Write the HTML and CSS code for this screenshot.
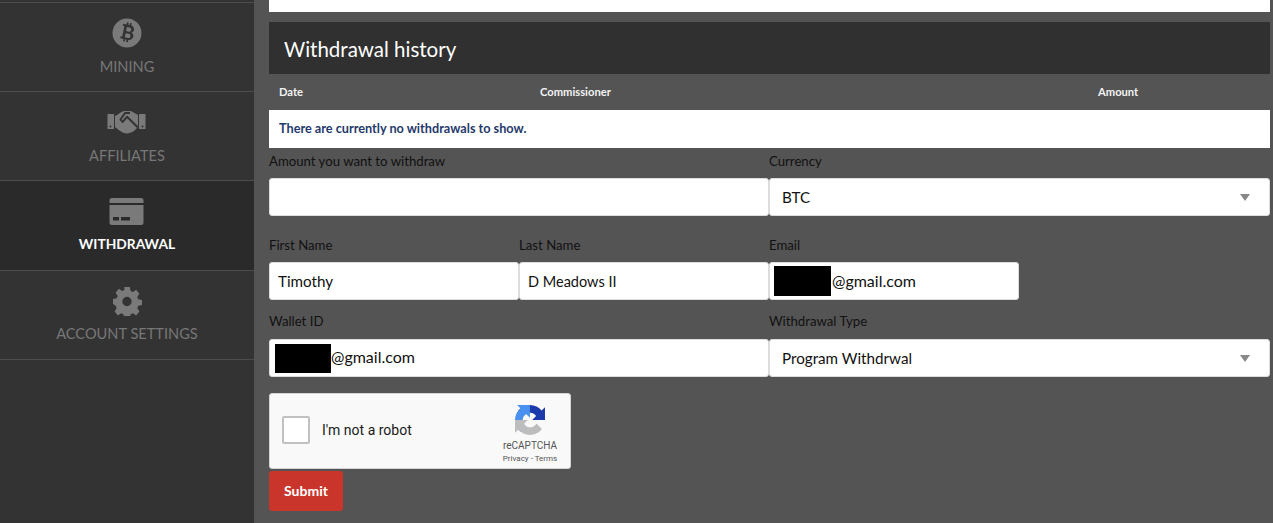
FILE: index.html
```html
<!DOCTYPE html>
<html lang="en">
<head>
<meta charset="utf-8">
<title>Withdrawal</title>
<link rel="stylesheet" href="styles.css">
</head>
<body>
<div class="page">
  <nav class="sidebar">
    <a class="nav-item nav-item-low">
      <svg class="nav-icon" width="30" height="30" viewBox="0 0 30 30"><circle cx="15" cy="15" r="14.5" fill="#7a7a7a"/><path fill="#333" fill-rule="evenodd" transform="rotate(12 15 15) translate(-1.500 -1.500) scale(1.100)" d="M10 7.5h3V5.5h1.6v2h1.2V5.5h1.6v2.1c2 .4 3.2 1.6 3.2 3.4 0 1.3-.6 2.2-1.7 2.8 1.5.5 2.4 1.6 2.4 3.2 0 2.3-1.6 3.6-3.9 3.9v2.1h-1.6v-2h-1.2v2H13v-2h-3v-1.9h1.4V9.4H10zm3.8 2.2v3.8h2.4c1.1 0 1.9-.8 1.9-1.9s-.8-1.9-1.9-1.9zm0 5.7v3.9h2.9c1.2 0 2-.8 2-1.9 0-1.2-.8-2-2-2z"/></svg>
      <span class="nav-label">MINING</span>
    </a>
    <a class="nav-item nav-item-low">
      <svg class="nav-icon" width="40" height="30" viewBox="0 0 40 30"><g fill="#7a7a7a"><rect x="0.500" y="7" width="6.500" height="15" rx=".5"/><rect x="32" y="7" width="6.500" height="15" rx=".5"/><path d="M8 9C11 8 13 5 17 4H24C26 5 29 7 31 8V20L27 24C24 26 20 27 17 26C14 25 11 22 8 20Z"/></g><g fill="#333"><circle cx="3.500" cy="19.500" r="1"/><circle cx="35.500" cy="19.500" r="1"/></g><path fill="none" stroke="#333" stroke-width="2" stroke-linejoin="round" d="M23 6H18L13.500 12.500L15.500 15L20 9.800L30.700 20.300"/></svg>
      <span class="nav-label">AFFILIATES</span>
    </a>
    <a class="nav-item nav-item-active">
      <svg class="nav-icon" width="36" height="30" viewBox="0 0 36 30"><path fill="#7a7a7a" d="M3 2h29a2.500 2.500 0 0 1 2.500 2.500V7H.5V4.500A2.500 2.500 0 0 1 3 2zM.5 9h34v17.500A2.500 2.500 0 0 1 32 29H3a2.500 2.500 0 0 1-2.500-2.500z"/><rect x="4" y="21" width="6" height="3.500" fill="#2a2a2a"/><rect x="12" y="21" width="9" height="3.500" fill="#2a2a2a"/></svg>
      <span class="nav-label nav-label-active">WITHDRAWAL</span>
    </a>
    <a class="nav-item">
      <svg class="nav-icon" width="30" height="30" viewBox="0 0 30 30"><path fill="#7a7a7a" fill-rule="evenodd" d="M12.200 1h5.600l.8 3.900 2.300 1 3.200-2.200 3.300 4-2.100 3.300 1 2.300 3.700.7v5l-3.700.800-1 2.300 2.100 3.300-3.300 4-3.200-2.200-2.300 1-.8 3.800h-5.600l-.8-3.800-2.300-1-3.200 2.200-3.300-4 2.100-3.300-1-2.300L1 18v-5l3.700-.7 1-2.300-2.100-3.300 3.300-4 3.200 2.200 2.300-1zM15 10.800a4.700 4.700 0 1 0 0 9.400 4.700 4.700 0 0 0 0-9.400z"/></svg>
      <span class="nav-label">ACCOUNT SETTINGS</span>
    </a>
  </nav>

  <main class="content">
    <div class="top-panel"></div>
    <section class="history">
      <h2 class="history-title">Withdrawal history</h2>
      <div class="history-head">
        <span class="col-date">Date</span>
        <span class="col-commissioner">Commissioner</span>
        <span class="col-amount">Amount</span>
      </div>
      <div class="history-empty">There are currently no withdrawals to show.</div>
    </section>

    <form class="withdraw-form">
      <div class="row row-two row-first">
        <label class="field">
          <span class="field-label">Amount you want to withdraw</span>
          <input class="control" type="text">
        </label>
        <label class="field">
          <span class="field-label">Currency</span>
          <span class="select-wrap"><select class="control control-select"><option>BTC</option></select></span>
        </label>
      </div>
      <div class="row row-four row-names">
        <label class="field">
          <span class="field-label">First Name</span>
          <input class="control" type="text" value="Timothy">
        </label>
        <label class="field">
          <span class="field-label">Last Name</span>
          <input class="control control-last" type="text" value="D Meadows II">
        </label>
        <label class="field">
          <span class="field-label">Email</span>
          <span class="redact-wrap"><input class="control control-email" type="text" value="@gmail.com"><span class="redact redact-email"></span></span>
        </label>
      </div>
      <div class="row row-two row-wallet">
        <label class="field">
          <span class="field-label">Wallet ID</span>
          <span class="redact-wrap"><input class="control control-wallet" type="text" value="@gmail.com"><span class="redact redact-wallet"></span></span>
        </label>
        <label class="field">
          <span class="field-label">Withdrawal Type</span>
          <span class="select-wrap"><select class="control control-select"><option>Program Withdrwal</option></select></span>
        </label>
      </div>

      <div class="recaptcha">
        <span class="recaptcha-box"></span>
        <span class="recaptcha-text">I'm not a robot</span>
        <div class="recaptcha-brand">
          <svg class="recaptcha-logo" width="32" height="32" viewBox="0 0 64 64">
            <path fill="#1c3aa9" d="M64 31.955l-.033-1.37V4.687l-7.16 7.16C50.948 4.674 42.033.093 32.05.093c-10.4 0-19.622 4.96-25.458 12.64l11.736 11.86a15.55 15.55 0 0 1 4.754-5.334c2.05-1.6 4.952-2.906 8.968-2.906.485 0 .86.057 1.135.163 4.976.393 9.288 3.14 11.828 7.124l-8.307 8.307L64 31.953"/>
            <path fill="#4a90f0" d="M31.862.094l-1.37.033H4.594l7.16 7.16C4.58 13.147 0 22.06 0 32.046c0 10.4 4.96 19.622 12.64 25.458l11.86-11.736a15.55 15.55 0 0 1-5.334-4.754c-1.6-2.05-2.906-4.952-2.906-8.968 0-.485.057-.86.163-1.135.393-4.976 3.14-9.288 7.124-11.828l8.307 8.307L31.86.095"/>
            <path fill="#bdbdbd" d="M.001 32.045l.033 1.37v25.898l7.16-7.16c5.86 7.173 14.774 11.754 24.76 11.754 10.4 0 19.622-4.96 25.458-12.64L45.677 39.407a15.55 15.55 0 0 1-4.754 5.334c-2.05 1.6-4.952 2.906-8.968 2.906-.485 0-.86-.057-1.135-.163-4.976-.393-9.288-3.14-11.828-7.124l8.307-8.307c-10.522.001-22.4.024-27.3-.008"/>
          </svg>
          <span class="recaptcha-name">reCAPTCHA</span>
          <span class="recaptcha-links">Privacy - Terms</span>
        </div>
      </div>
      <button class="submit" type="button">Submit</button>
    </form>
  </main>
</div>
</body>
</html>
```
FILE: styles.css
```css
* { box-sizing: border-box; }
html, body { margin: 0; height: 100%; overflow: hidden; }
body { font-family: Lato, "Noto Sans", sans-serif; background: #545454; color: #111; }

.page { display: flex; height: 523px; overflow: hidden; }

.sidebar { width: 254px; flex: none; background: #333; padding-top: 2px; height: 100%; }
.nav-item {
  display: flex; flex-direction: column; align-items: center;
  height: 89px; padding-top: 15px;
  border-top: 1px solid #4d4d4d;
  color: #777; text-decoration: none;
}
.nav-item:last-child { height: 90px; border-bottom: 1px solid #4d4d4d; }
.nav-item-active { background: #2a2a2a; color: #fff; height: 90px; }
.nav-icon { display: block; height: 30px; }
.nav-label { margin-top: 8px; font-size: 14.600px; line-height: 19px; }
.nav-item-low .nav-label { margin-top: 9px; }
.nav-label-active { font-size: 13.800px; font-weight: 700; }

.content { flex: 1; padding: 0 3px 0 15px; min-width: 0; }
.top-panel { height: 12px; background: #fff; }

.history { margin-top: 10px; }
.history-title {
  margin: 0; height: 52px; padding: 0 15px; background: #303030; color: #fff;
  font-size: 20.500px; font-weight: 400; line-height: 54px;
}
.history-head {
  display: grid; grid-template-columns: 261px 558px 1fr; height: 36px; padding: 0 0 2px 10px;
  align-items: center; color: #f2f2f2; font-size: 11.200px; font-weight: 700;
}
.history-empty {
  height: 38px; padding-left: 10px; background: #fff; color: #1f3a6b;
  font-size: 12.700px; font-weight: 700; line-height: 36px;
}

.row { display: grid; }
.row-two { grid-template-columns: 500px 1fr; }
.row-four { grid-template-columns: 250px 250px 250px; }
.row-first { margin-top: 5px; }
.row-names { margin-top: 21px; }
.row-wallet { margin-top: 13px; }
.row-wallet .field-label { height: 26px; }

.field { display: flex; flex-direction: column; min-width: 0; }
.field-label { height: 25px; font-size: 13.200px; line-height: 16px; color: #111; }
.control {
  display: block; width: 100%; height: 38px; padding: 0 8px; margin: 0;
  border: 1px solid #ddd; border-radius: 3px; background: #fff; color: #111;
  font-family: inherit; font-size: 15.200px; outline: none;
}
.select-wrap, .redact-wrap { position: relative; display: block; }
.control-select { appearance: none; -webkit-appearance: none; padding: 0 12px; height: 38px; }
.select-wrap::after {
  content: ""; position: absolute; right: 20px; top: 16px;
  border-left: 5px solid transparent; border-right: 5px solid transparent; border-top: 7px solid #888;
  pointer-events: none;
}
.control-last { font-size: 14.500px; }
.control-email { padding: 0 8px 2px 62px; font-size: 16px; }
.control-wallet { padding: 0 8px 4px 61px; font-size: 16px; }
.redact { position: absolute; background: #000; }
.redact-email { left: 5px; top: 4px; width: 57px; height: 30px; }
.redact-wallet { left: 6px; top: 5px; width: 56px; height: 29px; }

.recaptcha {
  display: flex; align-items: center; width: 302px; height: 76px; margin-top: 16px; padding: 0 12px 2px 12px;
  background: #f9f9f9; border: 1px solid #d3d3d3; border-radius: 3px;
  font-family: Roboto, sans-serif;
}
.recaptcha-box { width: 28px; height: 28px; flex: none; background: #fff; border: 2px solid #c1c1c1; border-radius: 2px; }
.recaptcha-text { margin-left: 12px; font-size: 14px; color: #1a1a1a; }
.recaptcha-brand { margin-left: auto; display: flex; flex-direction: column; align-items: center; color: #555; width: 56px; padding-top: 9px; }
.recaptcha-logo { display: block; width: 30px; height: 30px; }
.recaptcha-name { margin-top: 5px; font-size: 10px; line-height: 12px; }
.recaptcha-links { margin-top: 1px; font-size: 8px; line-height: 12px; white-space: nowrap; }

.submit {
  display: block; width: 74px; height: 40px; margin-top: 2px; padding: 0 0 2px;
  background: #c9352b; color: #fff; border: 0; border-radius: 3px;
  font-family: inherit; font-size: 14px; font-weight: 700;
}
```
